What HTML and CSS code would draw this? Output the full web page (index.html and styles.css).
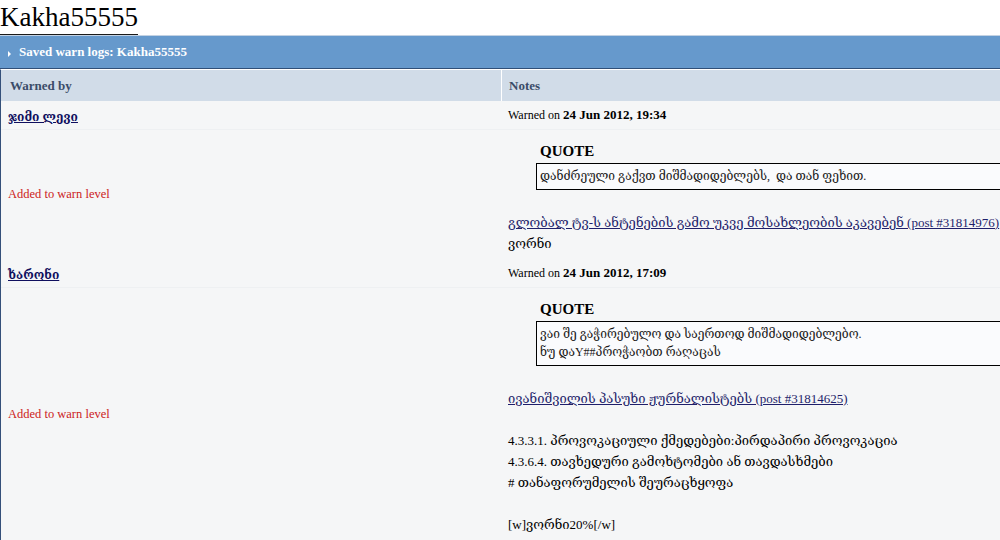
FILE: index.html
```html
<!DOCTYPE html>
<html lang="ka">
<head>
<meta charset="utf-8">
<title>Kakha55555</title>
<link rel="stylesheet" href="styles.css">
</head>
<body>
<div class="page">
  <div class="title-wrap"><span class="title">Kakha55555</span></div>
  <div class="maintitle"><span class="arrow"></span><span>Saved warn logs: Kakha55555</span></div>
  <div class="log">
    <div class="th th-left">Warned by</div>
    <div class="th th-right">Notes</div>

    <div class="cell who"><a href="#" class="user">ჯიმი ლევი</a></div>
    <div class="cell when">Warned on <b>24 Jun 2012, 19:34</b></div>
    <div class="cell level">Added to warn level</div>
    <div class="cell note">
      <div class="quote">
        <div class="quote-label">QUOTE</div>
        <div class="quote-box">დანძრეული გაქვთ მიშმადიდებლებს,&nbsp; და თან ფეხით.</div>
      </div>
      <a href="#" class="topic">გლობალ ტვ-ს ანტენების გამო უკვე მოსახლეობის აკავებენ (post #31814976)</a><br>
      ვორნი
    </div>

    <div class="cell who"><a href="#" class="user">ხარონი</a></div>
    <div class="cell when">Warned on <b>24 Jun 2012, 17:09</b></div>
    <div class="cell level">Added to warn level</div>
    <div class="cell note">
      <div class="quote">
        <div class="quote-label">QUOTE</div>
        <div class="quote-box">ვაი შე გაჭირებულო და საერთოდ მიშმადიდებლებო.<br>ნუ დაY##პროჭაობთ რაღაცას</div>
      </div>
      <a href="#" class="topic">ივანიშვილის პასუხი ჟურნალისტებს (post #31814625)</a><br>
      <br>
      4.3.3.1. პროვოკაციული ქმედებები:პირდაპირი პროვოკაცია<br>
      4.3.6.4. თავხედური გამოხტომები ან თავდასხმები<br>
      # თანაფორუმელის შეურაცხყოფა<br>
      <br>
      [w]ვორნი20%[/w]
    </div>
  </div>
</div>
</body>
</html>
```

FILE: styles.css
```css
html, body {
  margin: 0;
  padding: 0;
  background: #ffffff;
  overflow: hidden;
}

body {
  font-family: "Liberation Serif", "DejaVu Serif", serif;
  color: #000;
}

.page {
  width: 1030px;
}

.title-wrap {
  height: 35px;
}

.title {
  display: inline-block;
  font-size: 27px;
  line-height: 34px;
  border-bottom: 1px solid #1a1a1a;
  color: #000;
}

.maintitle {
  display: flex;
  align-items: center;
  height: 32px;
  background: #6699cc;
  border-top: 1px solid #c3d2e3;
  border-bottom: 1px solid #2f4f78;
  color: #ffffff;
  font-weight: bold;
  font-size: 13px;
  padding-left: 8px;
  gap: 8px;
}

.arrow {
  width: 0;
  height: 0;
  border-top: 3px solid transparent;
  border-bottom: 3px solid transparent;
  border-left: 3px solid #ffffff;
  margin-top: 3px;
}

.log {
  display: grid;
  grid-template-columns: 500px 1fr;
  border-left: 1px solid #34507a;
  border-top: 1px solid #ffffff;
  background: #f5f6f7;
}

.th {
  background: #d1dce8;
  color: #3b4c68;
  font-weight: bold;
  font-size: 13px;
  line-height: 31px;
  height: 31px;
}

.th-left {
  padding-left: 9px;
}

.th-right {
  border-left: 1px solid #ffffff;
  padding-left: 7px;
}

.cell {
  padding: 7px 8px 7px 7px;
}

.who, .when {
  font-size: 12px;
  line-height: 14px;
}

.who {
  padding-top: 9px;
  padding-bottom: 5px;
}

.when b {
  font-size: 13px;
}

.user {
  color: #0f0f5e;
  font-weight: bold;
  font-size: 12px;
  text-decoration: underline;
}

.level {
  display: flex;
  align-items: center;
  color: #cc2222;
  font-size: 12.5px;
  border-top: 1px solid #eef0f2;
}

.note {
  font-size: 13px;
  line-height: 21px;
  padding: 5px 0 5px 7px;
  border-top: 1px solid #eef0f2;
}

.quote {
  margin: 6px 0 22px 28px;
}

.quote-label {
  font-weight: bold;
  font-size: 15px;
  line-height: 20px;
  padding-left: 4px;
  margin-bottom: 2px;
}

.quote-box {
  background: #fafbfd;
  border: 1px solid #000000;
  padding: 3px 4px 4px 3px;
  line-height: 18px;
  font-size: 12px;
  color: #1a1a1a;
}

.topic {
  color: #1f1f6b;
  text-decoration: underline;
}
```
